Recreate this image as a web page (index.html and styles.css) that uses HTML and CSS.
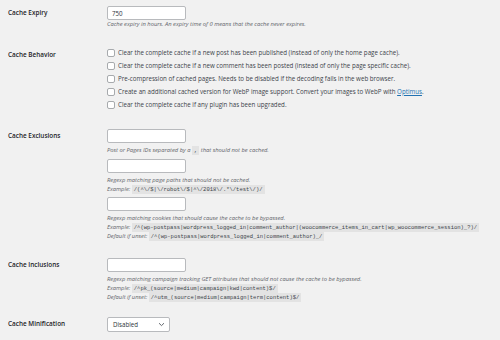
FILE: index.html
```html
<!DOCTYPE html>
<html lang="en">
<head>
    <meta charset="UTF-8">
    <meta name="viewport" content="width=device-width, initial-scale=1.0">
    <title>Cache Enabler Settings</title>
    <link rel="stylesheet" href="styles.css">
</head>
<body>
    <div class="form-table">

        <!-- Expiry -->
        <div class="row first">
            <div class="label">Cache Expiry</div>
            <div class="field">
                <input type="text" class="text-input" value="750">
                <p class="desc">Cache expiry in hours. An expiry time of 0 means that the cache never expires.</p>
            </div>
        </div>

        <!-- Behavior -->
        <div class="row behavior">
            <div class="label">Cache Behavior</div>
            <div class="field checks">
                <label class="check"><span class="box"></span>Clear the complete cache if a new post has been published (instead of only the home page cache).</label>
                <label class="check"><span class="box"></span>Clear the complete cache if a new comment has been posted (instead of only the page specific cache).</label>
                <label class="check"><span class="box"></span>Pre-compression of cached pages. Needs to be disabled if the decoding fails in the web browser.</label>
                <label class="check"><span class="box"></span><span>Create an additional cached version for WebP image support. Convert your images to WebP with <a href="#">Optimus</a>.</span></label>
                <label class="check"><span class="box"></span>Clear the complete cache if any plugin has been upgraded.</label>
            </div>
        </div>

        <!-- Exclusions -->
        <div class="row exclusions">
            <div class="label">Cache Exclusions</div>
            <div class="field">
                <input type="text" class="text-input">
                <p class="desc gap">Post or Pages IDs separated by a <code>,</code> that should not be cached.</p>
                <input type="text" class="text-input">
                <p class="desc">Regexp matching page paths that should not be cached.<br>
                    Example: <code>/(^\/$|\/robot\/$|^\/2018\/.*\/test\/)/</code></p>
                <input type="text" class="text-input">
                <p class="desc">Regexp matching cookies that should cause the cache to be bypassed.<br>
                    Example: <code>/^(wp-postpass|wordpress_logged_in|comment_author|(woocommerce_items_in_cart|wp_woocommerce_session)_?)/</code><br>
                    Default if unset: <code>/^(wp-postpass|wordpress_logged_in|comment_author)_/</code></p>
            </div>
        </div>

        <!-- Inclusions -->
        <div class="row inclusions">
            <div class="label">Cache Inclusions</div>
            <div class="field">
                <input type="text" class="text-input">
                <p class="desc">Regexp matching campaign tracking GET attributes that should not cause the cache to be bypassed.<br>
                    Example: <code>/^pk_(source|medium|campaign|kwd|content)$/</code><br>
                    Default if unset: <code>/^utm_(source|medium|campaign|term|content)$/</code></p>
            </div>
        </div>

        <!-- Minification -->
        <div class="row">
            <div class="label">Cache Minification</div>
            <div class="field">
                <div class="select">
                    <span>Disabled</span>
                    <svg width="7" height="5" viewBox="0 0 7 5"><path d="M1 1.2 L3.5 3.6 L6 1.2" fill="none" stroke="#50575e" stroke-width="0.9"/></svg>
                </div>
            </div>
        </div>

    </div>
</body>
</html>
```

FILE: styles.css
```css
body {
    margin: 0;
    padding: 0;
    background: #f1f1f1;
    font-family: "Open Sans", Arial, sans-serif;
    color: #3c434a;
    font-size: 6.2px;
}

.form-table {
    padding-left: 8px;
}

.row {
    display: grid;
    grid-template-columns: 99px 1fr;
    padding: 9px 0;
}

.row.first {
    padding-top: 6px;
    padding-bottom: 10px;
}

.row.behavior {
    padding-bottom: 11px;
}

.row.exclusions {
    padding-bottom: 8px;
}

.row.inclusions {
    padding-bottom: 6px;
}

.label {
    color: #1d2327;
    font-weight: 600;
    font-size: 6.4px;
    line-height: 13px;
}

.text-input {
    display: block;
    box-sizing: border-box;
    width: 79px;
    height: 14px;
    margin: 0;
    padding: 0 4px;
    border: 1px solid #b8babd;
    border-radius: 2px;
    background: #fff;
    font-family: "Open Sans", Arial, sans-serif;
    font-size: 6.2px;
    color: #2c3338;
}

.desc {
    margin: 3px 0;
    font-style: italic;
    font-size: 5.8px;
    color: #5f646a;
    line-height: 9px;
}

.first .desc {
    margin-top: 0;
}

.desc.gap {
    margin-bottom: 4px;
}

.desc:last-child {
    margin-bottom: 0;
}

code {
    font-family: "Liberation Mono", monospace;
    font-style: normal;
    font-size: 5.5px;
    line-height: 9px;
    background: #e3e3e3;
    color: #3c434a;
    padding: 1px 2px;
}

.checks {
    display: flex;
    flex-direction: column;
    gap: 5px;
    padding-top: 0.5px;
}

.check {
    display: flex;
    align-items: center;
    line-height: 8px;
}

.box {
    flex: none;
    width: 8px;
    height: 8px;
    box-sizing: border-box;
    border: 1px solid #a7aaad;
    border-radius: 2px;
    background: #fff;
    margin-right: 3px;
}

a {
    color: #2271b1;
}

.select {
    display: flex;
    align-items: center;
    justify-content: space-between;
    box-sizing: border-box;
    width: 63px;
    height: 15px;
    padding: 0 4px 0 5px;
    border: 1px solid #b8babd;
    border-radius: 2px;
    background: #fff;
    color: #2c3338;
}
```
